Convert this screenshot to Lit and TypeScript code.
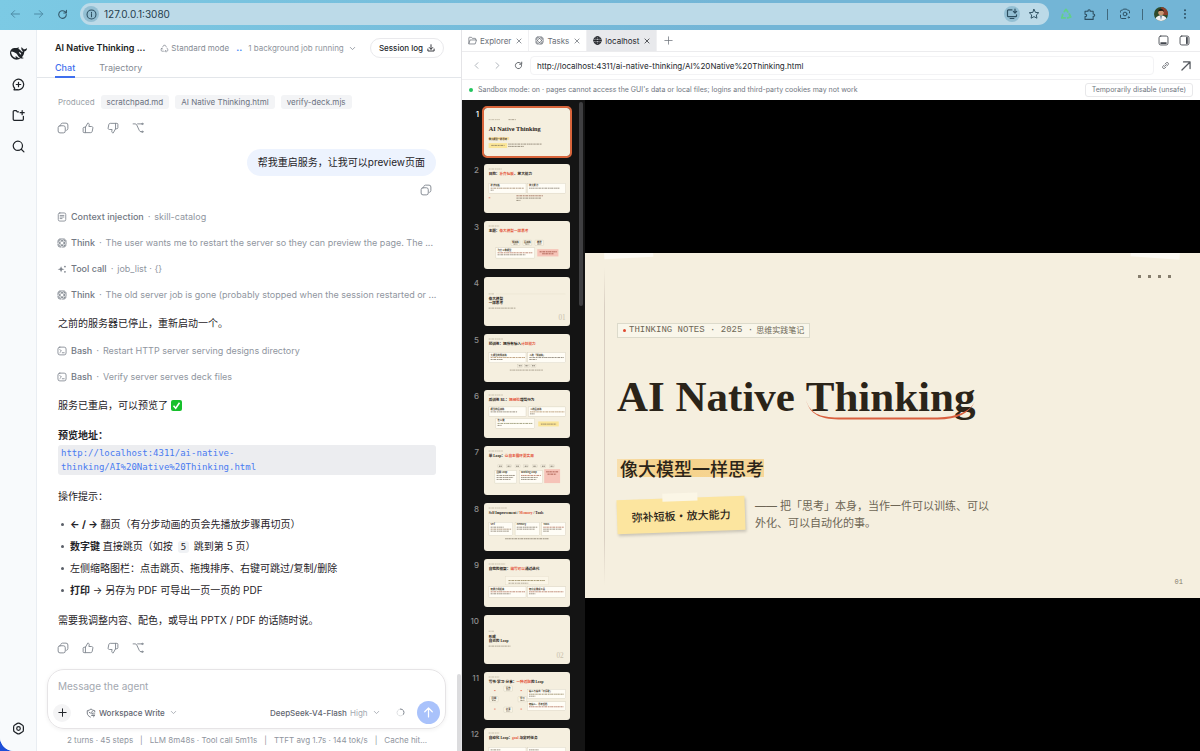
import { LitElement, html, svg, css, TemplateResult } from "lit";
import { customElement, property } from "lit/decorators.js";

/* ---------- icons: 16 × 16 grid, stroked with the current colour ---------- */
const paths: Record<string, TemplateResult> = {
  back: svg`<path d="M14 8H3M7.500 3.500 3 8l4.500 4.500"/>`,
  forward: svg`<path d="M2 8h11M8.500 3.500 13 8l-4.500 4.500"/>`,
  reload: svg`<path d="M13.500 8A5.500 5.500 0 1 1 11.600 3.900L13.500 5.600M13.700 2v3.800H9.900"/>`,
  info: svg`<circle cx="8" cy="8" r="6.500"/><path d="M8 7.300v4M8 4.600v1.200"/>`,
  install: svg`<path d="M8 2.500H3.200a1.200 1.200 0 0 0-1.200 1.200v6.600a1.200 1.200 0 0 0 1.200 1.200h9.600a1.200 1.200 0 0 0 1.200-1.200V9M5.500 14h5M12 1.500v5M9.800 4.600 12 6.800l2.200-2.200"/>`,
  star: svg`<path d="m8 1.800 1.900 4 4.400.5-3.200 3 .8 4.300L8 11.500l-3.900 2.100.8-4.300-3.200-3 4.400-.5z"/>`,
  recycle: svg`<path d="M5.800 4.600 8 1.800l2.400 3.400M12.300 8l2 3.800-4 1.400M6.700 13.200H2.400L3.600 8.600" stroke-width="2.400"/>`,
  puzzle: svg`<path d="M2.500 4h3.700c-.6-2.600 3.200-2.600 2.600 0h3.700v3.500c2.500-.5 2.500 3.200 0 2.700V14h-10v-3.500c2.600.4 2.600-3.200 0-2.800z"/>`,
  lens: svg`<path d="M2 5.500v-1A1.500 1.500 0 0 1 3.500 3h1L5.800 1.500h4.400L11.500 3h1A1.500 1.500 0 0 1 14 4.500v2M2 9.500v3A1.500 1.500 0 0 0 3.500 14H9"/><circle cx="8" cy="8" r="2.500"/><circle cx="13" cy="12.500" r=".8"/>`,
  dots: svg`<g fill="currentColor" stroke="none"><circle cx="8" cy="3" r="1.300"/><circle cx="8" cy="8" r="1.300"/><circle cx="8" cy="13" r="1.300"/></g>`,
  newChat: svg`<path d="M3.300 12.600A6.500 6.500 0 1 1 6.300 14.300L2.500 14.500zM8 5.300v5.400M5.300 8h5.400"/>`,
  folderPlus: svg`<path d="M8 3.500H6.500L5.300 2H2.800A1.300 1.300 0 0 0 1.500 3.300v9.400A1.300 1.300 0 0 0 2.800 14h9.900a1.300 1.300 0 0 0 1.300-1.300V9M12.500 2v5M10 4.500h5"/>`,
  search: svg`<circle cx="7.200" cy="7.200" r="5.700"/><path d="m11.400 11.400 3.300 3.300"/>`,
  gear: svg`<path d="M6.600 1.700a2.800 2.800 0 0 1 2.800 0l3.200 1.900A2.800 2.800 0 0 1 14 6v4a2.800 2.800 0 0 1-1.400 2.400l-3.200 1.900a2.800 2.800 0 0 1-2.800 0l-3.200-1.900A2.800 2.800 0 0 1 2 10V6a2.800 2.800 0 0 1 1.400-2.400z"/><circle cx="8" cy="8" r="2.200"/>`,
  mode: svg`<path d="M4.700 5.300 6.700 2.200h2.600l2 3.100M12.600 7.600l1.700 3-1.300 2.200h-3M6.300 12.800H3L1.700 10.600l1.700-3M10 11.300l-1.500 1.500L10 14.300M2 8.400l1.500-.9 1 1.600"/>`,
  chevron: svg`<path d="m3 5.500 5 5 5-5"/>`,
  left: svg`<path d="M10.500 3 5.500 8l5 5"/>`,
  right: svg`<path d="m5.500 3 5 5-5 5"/>`,
  download: svg`<path d="M8 1.500v9M4.500 7 8 10.500 11.500 7M1.800 10v4h12.400v-4"/>`,
  copy: svg`<rect x="1.500" y="5" width="9.500" height="9.500" rx="2.500"/><path d="M5 3.200A2.500 2.500 0 0 1 7.300 1.500h4.700A2.500 2.500 0 0 1 14.500 4v4.700a2.500 2.500 0 0 1-1.700 2.400"/>`,
  up: svg`<path d="M4.600 7v7.200H2.800a1.300 1.300 0 0 1-1.300-1.300V8.300A1.300 1.300 0 0 1 2.800 7zM4.600 7l3-5.500c1.600 0 2.300 1 2 2.400L9.200 6h3.600c1.200 0 1.900 1 1.700 2l-.9 4.600c-.2 1-1 1.600-2 1.600h-7"/>`,
  down: svg`<path d="M11.400 9V1.800h1.800a1.300 1.300 0 0 1 1.300 1.300v4.600A1.300 1.300 0 0 1 13.200 9zM11.400 9l-3 5.500c-1.600 0-2.300-1-2-2.400L6.800 10H3.200C2 10 1.300 9 1.500 8l.9-4.600c.2-1 1-1.600 2-1.600h7"/>`,
  branch: svg`<path d="M1.500 2.500h2.700c1 0 1.600.5 2.100 1.400l3.400 7.300c.5 1.100 1.200 1.800 2.300 1.800h1M7.500 2.500h5.500"/><circle cx="13.800" cy="2.500" r=".9"/><circle cx="13.800" cy="13" r=".9"/>`,
  note: svg`<rect x="2" y="1.500" width="12" height="13" rx="2.500"/><path d="M5 5.500h6M5 8h6M5 10.500h3"/>`,
  atom: svg`<rect x="1.500" y="1.500" width="13" height="13" rx="3.500" stroke-dasharray="7 2"/><ellipse cx="8" cy="8" rx="6.500" ry="3" transform="rotate(45 8 8)"/><ellipse cx="8" cy="8" rx="6.500" ry="3" transform="rotate(-45 8 8)"/>`,
  spark: svg`<g fill="currentColor" stroke="none"><path d="M6.500 3.500 8 7l4 1.300-4 1.300-1.500 3.600L5 9.600 1 8.300 5 7z"/><circle cx="12.700" cy="4" r="1.400"/><circle cx="12.700" cy="12.400" r="1.400"/></g>`,
  bash: svg`<rect x="1.500" y="1.800" width="13" height="12.400" rx="3"/><path d="M4.500 5.500 7 8l-2.500 2.500M8.500 10.800h3"/>`,
  plus: svg`<path d="M8 1.500v13M1.500 8h13"/>`,
  shield: svg`<path d="M14 6.500V4.300C11.500 4 9.500 3 8 1.500 6.500 3 4.500 4 2 4.300V8c0 3 2 5.200 5 6.500M5 6.500l2 2 3.500-3.500M14 9.500H9l2-2M9 12h5l-2 2"/>`,
  send: svg`<path d="M8 14.500v-13M2.500 7 8 1.500 13.500 7"/>`,
  spin: svg`<path d="M8 1.800a6.200 6.200 0 0 1 5.400 9.300"/><path d="M13.400 11.100A6.200 6.200 0 1 1 8 1.800" opacity=".25"/>`,
  folder: svg`<path d="M1.500 13V3.300A1 1 0 0 1 2.500 2.300h3.700l1.500 1.900h5a1 1 0 0 1 1 1v1.700M1.500 13.500 3.800 7h11.400l-2.200 6.500z"/>`,
  close: svg`<path d="m2.500 2.500 11 11M13.500 2.500l-11 11"/>`,
  globe: svg`<circle cx="8" cy="8" r="6.500"/><ellipse cx="8" cy="8" rx="2.900" ry="6.500"/><path d="M1.500 8h13M2.500 4.700h11M2.500 11.300h11"/>`,
  panelBottom: svg`<rect x="1.500" y="1.500" width="13" height="13" rx="2.500"/><path d="M4.500 11.700h7" stroke-width="2.600"/>`,
  panelRight: svg`<rect x="1.500" y="1.500" width="13" height="13" rx="2.500"/><path d="M11.500 4v8" stroke-width="2.600"/>`,
  link: svg`<path d="M7 4.500 9.500 2a3 3 0 0 1 4.300 4.300L11.300 8.800M9 11.500 6.500 14a3 3 0 0 1-4.300-4.300L4.700 7.200M5.800 10.200l4.400-4.400"/>`,
  arrowOut: svg`<path d="M1.500 14.500l13-13M4 1.500h10.500V12"/>`,
};

const icon = (name: string, size: number, weight = 1.3) => html`<svg
  width=${size} height=${size} viewBox="0 0 16 16" fill="none" stroke="currentColor"
  stroke-width=${weight} stroke-linecap="round" stroke-linejoin="round" aria-hidden="true">${paths[name]}</svg>`;

const whale = html`<svg width="17" height="17" viewBox="0 0 24 24" fill="currentColor" aria-hidden="true"><path d="M23.748 4.482c-.254-.124-.364.113-.512.234-.051.039-.094.09-.137.136-.372.397-.806.657-1.373.626-.829-.046-1.537.214-2.163.848-.133-.782-.575-1.248-1.247-1.548-.352-.156-.708-.311-.955-.65-.172-.241-.219-.51-.305-.774-.055-.16-.11-.323-.293-.35-.2-.031-.278.136-.356.276-.313.572-.434 1.202-.422 1.840.027 1.436.633 2.580 1.838 3.393.137.093.172.187.129.323-.082.280-.180.552-.266.833-.055.179-.137.217-.329.140a5.526 5.526 0 01-1.736-1.180c-.857-.828-1.631-1.742-2.597-2.458a11.365 11.365 0 00-.689-.471c-.985-.957.130-1.743.388-1.836.270-.098.093-.432-.779-.428-.872.004-1.670.295-2.687.684a3.055 3.055 0 01-.465.137 9.597 9.597 0 00-2.883-.102c-1.885.210-3.390 1.102-4.497 2.623C.082 8.606-.231 10.684.152 12.850c.403 2.284 1.569 4.175 3.360 5.653 1.858 1.533 3.997 2.284 6.438 2.140 1.482-.085 3.133-.284 4.994-1.860.470.234.962.327 1.780.397.630.059 1.236-.030 1.705-.128.735-.156.684-.837.419-.961-2.155-1.004-1.682-.595-2.113-.926 1.096-1.296 2.746-2.642 3.392-7.003.050-.347.007-.565 0-.845-.004-.170.035-.237.230-.256a4.173 4.173 0 001.545-.475c1.396-.763 1.960-2.015 2.093-3.517.020-.230-.004-.467-.247-.588zM11.581 18c-2.089-1.642-3.102-2.183-3.520-2.160-.392.024-.321.471-.235.763.090.288.207.486.371.739.114.167.192.416-.113.603-.673.416-1.842-.140-1.897-.167-1.361-.802-2.500-1.860-3.301-3.307-.774-1.393-1.224-2.887-1.298-4.482-.020-.386.093-.522.477-.592a4.696 4.696 0 011.529-.039c2.132.312 3.946 1.265 5.468 2.774.868.860 1.525 1.887 2.202 2.891.720 1.066 1.494 2.082 2.480 2.914.348.292.625.514.891.677-.802.090-2.140.110-3.054-.614zm1-6.440a.306.306 0 01.415-.287.302.302 0 01.200.288.306.306 0 01-.310.307.303.303 0 01-.304-.308zm3.110 1.596c-.200.081-.399.151-.590.160a1.245 1.245 0 01-.798-.254c-.274-.230-.470-.358-.552-.758a1.730 1.730 0 01.016-.588c.070-.327-.008-.537-.239-.727-.187-.156-.426-.199-.688-.199a.559.559 0 01-.254-.078c-.110-.054-.200-.190-.114-.358.028-.054.160-.186.192-.210.356-.202.767-.136 1.146.016.352.144.618.408 1.001.782.391.451.462.576.685.914.176.265.336.537.445.848.067.195-.019.354-.250.452z"/></svg>`;

/* ---------- miniature slides, drawn on a 260 × 146 grid ---------- */
const RED = "#e4573d";
const INK = "#2b2419";

const head = (label: number, ...parts: [string, string?][]) => svg`
  ${ink(14, 15, label, "#b5ab97")}
  <text class="t" x="14" y="34">${parts.map(([t, c]) => svg`<tspan fill=${c ?? INK}>${t}</tspan>`)}</text>`;
const ink = (x: number, y: number, w: number, c = "#6d6352") =>
  svg`<path d="M${x} ${y}h${w}" stroke=${c} stroke-width="2" stroke-dasharray="5 1 3 1 7 2" fill="none"/>`;
const card = (x: number, y: number, w: number, h: number, title: string, lines: [number, string?][]) => svg`
  <rect x=${x} y=${y} width=${w} height=${h} fill="#fffdf6" stroke="#ccc5b2" stroke-width="1"/>
  ${title ? svg`<text class="s" x=${x + 5} y=${y + 9}>${title}</text>` : ink(x + 5, y + 8, 30)}
  ${lines.map(([lw, c], i) => ink(x + 5, y + 15 + i * 6, lw, c))}`;
const chip = (x: number, y: number, t: string) => svg`
  <rect x=${x} y=${y} width="26" height="16" rx="2" fill="#fbf6e8" stroke="#ccc5b2"/>
  <text class="s" x=${x + 13} y=${y + 8} text-anchor="middle">${t}</text>${ink(x + 7, y + 12, 12)}`;
const step = (x: number, y: number) => svg`
  <rect x=${x} y=${y} width="15" height="8" fill="#fbf6e8" stroke="#ccc5b2"/>${ink(x + 3, y + 4, 9, "#3c3425")}`;

const slides: { name: string; art: TemplateResult }[] = [
  { name: "AI Native Thinking", art: svg`
      ${ink(14, 35, 34, "#b5ab97")}${ink(74, 35, 22, "#8d8371")}
      <text class="h" x="14" y="70">AI Native Thinking</text>
      <rect x="14" y="88" width="62" height="8" fill="#f7dc9c"/>
      <text class="s" x="14" y="96" fill="#6b3410">像大模型一样思考</text>
      <rect x="14" y="106" width="56" height="15" fill="#fbe597"/>${ink(22, 113, 40)}
      ${ink(73, 109, 102)}${ink(73, 116, 48)}` },
  { name: "目的", art: svg`${head(40, ["目的："], ["补齐短板", RED], ["、放大能力"])}
      ${card(15, 58, 112, 30, "补齐短板", [[100, "#8a6a4a"], [10]])}
      ${card(131, 58, 116, 30, "放大能力", [[92]])}
      ${ink(14, 102, 6, RED)}${ink(98, 96, 80, "#8a4a35")}${ink(98, 103, 74)}${ink(98, 110, 12)}` },
  { name: "主题", art: svg`${head(32, ["主题："], ["像大模型一样思考", RED])}
      ${chip(82, 58, "预训练")}${chip(118, 58, "后训练")}${chip(154, 58, "推理")}
      ${card(36, 81, 117, 31, "为什么像模型", [[106, "#a3563f"], [84]])}
      <rect x="161" y="85" width="64" height="22" fill="#f6c3b8"/>${ink(168, 93, 52, "#8a3325")}${ink(176, 99, 34, "#8a3325")}` },
  { name: "像大模型一样思考", art: svg`${ink(14, 51, 16, "#b5ab97")}
      <path d="M36 51H246" stroke="#e2dac6"/>
      <text class="t" x="14" y="70" fill=${INK}>像大模型</text><text class="t" x="14" y="83" fill=${INK}>一样思考</text>
      ${ink(14, 94, 82, "#8d8371")}<text class="n" x="225" y="129">01</text>` },
  { name: "预训练", art: svg`${head(44, ["预训练：把所有输入"], ["计划能力", RED])}
      ${card(15, 56, 112, 31, "大模型的预训练", [[104, "#a37a4a"], [36]])}
      ${card(132, 56, 114, 31, "人的「预训练」", [[104], [22]])}
      ${step(102, 92)}${step(122, 92)}${step(142, 92)}${ink(78, 109, 100, "#8d8371")}` },
  { name: "后训练", art: svg`${head(44, ["后训练 RL："], ["把经验", RED], ["增强行为"])}
      ${card(15, 51, 112, 28, "模型的后训练", [[80]])}
      ${card(134, 51, 112, 28, "人的后训练", [[104, "#a37a4a"], [14]])}
      ${card(36, 86, 117, 30, "怎么做", [[106, "#7a7a4a"], [12]])}
      <rect x="164" y="95" width="62" height="15" fill="#fbe597"/>${ink(172, 103, 46)}` },
  { name: "单 Loop", art: svg`${head(44, ["单 Loop："], ["让自主循环更实用", RED])}
      ${[42, 68, 94, 120, 146, 172, 198].map((x) => step(x, 57))}
      ${card(33, 74, 66, 38, "回顾 Loop", [[56], [50], [42]])}
      ${card(107, 74, 70, 38, "Working Loop", [[60, "#a3563f"], [50], [46]])}
      <rect x="182" y="70" width="48" height="42" fill="#f6c3b8"/>${ink(188, 78, 38, "#8a3325")}${ink(192, 85, 26, "#8a3325")}` },
  { name: "Self Improvement", art: svg`${head(56, ["Self Improvement / "], ["Memory", RED], [" / Tools"])}
      ${card(15, 58, 72, 40, "Self", [[40], [62, "#8a6a4a"], [56]])}
      ${card(94, 58, 74, 40, "Memory", [[62], [54]])}
      ${card(174, 58, 72, 40, "Tools", [[62, "#a3563f"], [56], [18]])}
      ${ink(64, 108, 132)}` },
  { name: "自我的框架", art: svg`${head(50, ["自我的框架："], ["编写可以", RED], ["通过迭代"])}
      <rect x="64" y="52" width="132" height="26" fill="#fbf6e8" stroke="#ddd5c0"/>${ink(74, 65, 110, "#7a6a3a")}${ink(74, 73, 60, "#8d8371")}
      ${card(15, 84, 112, 32, "把能力用起来", [[104, "#a3563f"], [60]])}
      ${card(131, 84, 116, 32, "把方法做成工具", [[104, "#a3563f"], [20]])}` },
  { name: "形成自己的 Loop", art: svg`${ink(14, 49, 16, "#b5ab97")}
      <text class="t" x="14" y="69" fill=${INK}>形成</text><text class="t" x="14" y="83" fill=${INK}>自己的 Loop</text>
      ${ink(14, 94, 66, "#8d8371")}<text class="n" x="219" y="131">02</text>` },
  { name: "写书 · 学习 · 分享", art: svg`${head(32, ["写书·学习·分享："], ["一种适配", RED], ["的 Loop"])}
      ${chip(60, 42, "写作")}${chip(17, 74, "回顾")}${chip(103, 74, "学习")}${chip(60, 106, "分享")}
      ${ink(30, 56, 5, RED)}${ink(110, 56, 5, RED)}${ink(30, 112, 5, RED)}${ink(110, 112, 5, RED)}
      ${card(131, 52, 116, 28, "输入与输出「不停歇」", [[106, "#7a6a3a"], [20]])}
      ${card(131, 90, 116, 26, "把输入、思考留档", [[104, "#a3563f"]])}` },
  { name: "自动化 Loop", art: svg`${head(32, ["自动化 Loop："], ["goal", RED], [" 与定时任务"])}
      ${card(15, 58, 112, 40, "", [[80], [60]])}${card(131, 58, 116, 40, "", [[80], [60]])}` },
];

@customElement("deck-thumb")
export class DeckThumb extends LitElement {
  @property({ type: Number }) index = 0;
  @property({ type: Boolean, reflect: true }) current = false;

  static styles = css`
    :host { display: grid; grid-template-columns: 17px 86px; column-gap: 5px; }
    .num { font: 500 8px/12px Inter, sans-serif; color: #8f8f8f; text-align: right; }
    :host([current]) .num { color: #fff; }
    .page { display: block; aspect-ratio: 16 / 9; padding: 0; border: 0; border-radius: 3px; background: #f5efdf; overflow: hidden; }
    :host([current]) .page { outline: 2px solid #d9653b; }
    .art { display: block; width: 100%; height: 100%; }
    .t { font: 700 11px "Liberation Serif", "Noto Sans CJK SC", serif; }
    .h { font: 700 19px "Liberation Serif", serif; fill: #2b2419; }
    .s { font: 700 7px "Noto Sans CJK SC", sans-serif; fill: #3c3425; }
    .n { font: 22px "Liberation Serif", serif; fill: #c9c1ad; }
  `;

  render() {
    const s = slides[this.index];
    return html`
      <span class="num">${this.index + 1}</span>
      <button class="page" aria-label=${s.name}>
        <svg class="art" viewBox="0 0 260 146" aria-hidden="true">${s.art}</svg>
      </button>`;
  }
}

@customElement("app-root")
export class AppRoot extends LitElement {
  static styles = css`
    :host { display: block; height: 100vh; background: #1d4ed8; font-family: Inter, "Noto Sans CJK SC", sans-serif; font-size: 9px; line-height: 14px; color: #1f2328; }
    * { box-sizing: border-box; }
    svg { display: block; flex: none; }
    button { font: inherit; color: inherit; background: none; border: 0; padding: 0; display: flex; align-items: center; justify-content: center; flex: none; }
    input, textarea, select { font: inherit; color: inherit; background: none; border: 0; padding: 0; margin: 0; outline: 0; appearance: none; resize: none; }
    p, ul, h1, h2 { margin: 0; padding: 0; }
    .window { height: 100%; display: flex; flex-direction: column; overflow: hidden; border-radius: 0 0 0 14px; background: #fff; }

    /* browser toolbar */
    .browser { display: flex; align-items: center; gap: 11px; height: 30px; padding: 0 9px 2px; background: linear-gradient(100deg, #7ccae4, #73b5d6 60%); color: #2c4e60; flex: none; }
    .nav { display: flex; gap: 12px; color: #4d8aa3; padding-right: 1px; }
    .nav .live { color: #34596b; }
    .omni { flex: 1; display: flex; align-items: center; gap: 5px; height: 22px; padding: 0 9px 0 3px; border-radius: 11px; background: #bcdae8; }
    .omni input { flex: 1; font-size: 10px; color: #26404e; }
    .disc { width: 16px; height: 16px; border-radius: 50%; background: #93bfd3; }
    .omni .fav { margin-left: 3px; }
    .green { color: #62d08a; }
    .sep { width: 1px; height: 11px; background: #41697d; }

    /* workspace */
    .work { flex: 1; min-height: 0; display: grid; grid-template-columns: 37px minmax(0, 425fr) minmax(0, 738fr); }
    .rail { display: flex; flex-direction: column; align-items: center; gap: 18px; padding: 16px 0; background: #f8fafc; border-right: 1px solid #e9edf2; }
    .rail .home { height: 14px; }
    .rail .end { margin-top: auto; }

    .chat { position: relative; display: flex; flex-direction: column; min-height: 0; border-right: 1px solid #e4e4e7; }
    .top { display: flex; align-items: center; height: 28px; margin-top: 4px; padding: 0 17px 0 18px; font-size: 8px; color: #858b94; white-space: nowrap; flex: none; }
    .top h1 { font-size: 9px; font-weight: 600; color: #1b1d21; margin-right: 15px; }
    .mode { gap: 2px; }
    .pulse { color: #3b82f6; font-size: 9px; margin: 0 6px 0 7px; }
    .jobs { gap: 5px; color: #8f959e; }
    .log { margin-left: auto; gap: 4px; height: 20px; padding: 0 8px; border: 1px solid #e9e9ec; border-radius: 10px; color: #24272c; font-weight: 500; }
    .tabs { display: flex; gap: 24px; height: 16px; padding: 0 18px; border-bottom: 1px solid #e3e6ea; color: #858b94; flex: none; }
    .tabs button { align-items: flex-start; height: 16px; line-height: 11px; }
    .tabs .on { color: #3f6fee; font-weight: 500; border-bottom: 2px solid #3f6fee; }

    .feed { flex: 1; min-height: 0; overflow: hidden; display: flex; flex-direction: column; padding: 17px 25px 0 20px; }
    .feed > * { margin-left: 1px; }
    .made { display: flex; align-items: center; gap: 6px; height: 14px; font-size: 8px; color: #9a9fa7; }
    .file { padding: 0 6px; height: 14px; border-radius: 3px; background: #f3f4f6; color: #6b7280; }
    .acts { display: flex; gap: 13px; margin: 13px 0 0; color: #7d838c; flex: none; }
    .ask { align-self: flex-end; margin-top: 15px; padding: 4px 11px; border-radius: 14px; background: #edf3fe; font-size: 10px; line-height: 19px; }
    .acts.own { align-self: flex-end; margin: 8px 4px 2px; }
    .row { display: flex; align-items: center; gap: 4px; margin: 12px -12px 0 0; height: 14px; color: #9096a0; white-space: nowrap; flex: none; }
    .row b { font-weight: 500; color: #717782; }
    .row svg { color: #7d838c; }
    .say { margin-top: 12px; font-size: 10px; line-height: 18px; display: flex; align-items: center; gap: 3px; flex: none; }
    .url { display: block; margin-top: 1px; padding: 1px 9px 1px 3px; border-radius: 3px; background: #ecedf0; color: #4a7bf0; font: 9px/14px "DejaVu Sans Mono", monospace; text-decoration: none; flex: none; }
    .tips { list-style: none; margin-top: 10px; display: flex; flex-direction: column; gap: 4px; font-size: 10px; line-height: 18px; flex: none; }
    .tips li { padding-left: 12px; position: relative; }
    .tips li::before { content: ""; position: absolute; left: 3px; top: 8px; width: 3px; height: 3px; border-radius: 50%; background: #5a5f68; }
    kbd { font: 9px/12px "DejaVu Sans Mono", monospace; background: #f0f2f5; border-radius: 3px; padding: 1px 3px; margin: 0 2px; }

    .composer { margin: 0 15px 0 10px; padding: 9px 5px 4px 10px; border: 1px solid #e6e4e6; border-radius: 17px; box-shadow: 0 1px 4px #0000000f; flex: none; }
    .composer textarea { display: block; width: 100%; height: 16px; line-height: 14px; font-size: 10px; overflow: hidden; }
    textarea::placeholder { color: #a3a8b0; opacity: 1; }
    .tools { display: flex; align-items: center; gap: 3px; margin: 6px 0 0 -5px; font-size: 8px; color: #5f656f; font-weight: 500; }
    .add { width: 18px; height: 18px; border-radius: 50%; background: #f4f4f5; color: #24272c; margin-right: 12px; }
    .tools .model { margin-left: auto; }
    .tools .effort { font-weight: 400; color: #a3a8b0; }
    .tools .chev { color: #a3a8b0; margin-left: 2px; }
    .wait { margin: 0 9px 0 13px; color: #717782; }
    .go { width: 23px; height: 23px; border-radius: 50%; background: #a9c2fb; color: #fff; }
    .stats { display: flex; justify-content: center; gap: 7px; height: 22px; line-height: 22px; font-size: 8px; color: #8f959e; white-space: nowrap; padding-right: 4px; flex: none; }
    .thumb { position: absolute; right: 0; bottom: 0; width: 4px; height: 77px; background: #dcdcde; border-radius: 2px 2px 0 0; }

    /* preview pane */
    .pane { display: flex; flex-direction: column; min-height: 0; }
    .strip { display: flex; align-items: stretch; height: 22px; border-bottom: 1px solid #ececee; color: #6b7078; font-size: 8px; padding-right: 10px; flex: none; }
    .tab { display: flex; align-items: center; gap: 3px; padding: 0 6px; border-right: 1px solid #f0f0f2; }
    .tab .x { margin-left: 2px; }
    .tab.on { background: #e8e9ec; color: #24272c; }
    .strip .new { margin-left: 7px; }
    .strip .panels { margin-left: auto; display: flex; gap: 10px; color: #44484f; }
    .addr { display: flex; align-items: center; gap: 12px; height: 28px; padding: 0 9px 0 10px; border-bottom: 1px solid #f0f0f2; color: #55595f; flex: none; }
    .addr .off { color: #a3a8b0; }
    .addr input { flex: 1; height: 19px; padding: 0 6px; border: 1px solid #f3f3f5; border-radius: 4px; font-size: 8px; color: #24272c; margin-left: -5px; margin-right: -4px; }
    .guard { display: flex; align-items: center; gap: 5px; height: 20px; padding: 0 7px; color: #717782; font-size: 7px; flex: none; }
    .lamp { width: 4px; height: 4px; border-radius: 50%; background: #22c55e; }
    .guard button { margin-left: auto; height: 14px; padding: 0 6px; border: 1px solid #e8e8ea; border-radius: 3px; }

    .deck { flex: 1; min-height: 0; display: flex; background: #000; }
    .list { position: relative; width: 123px; padding: 8px 0 0; display: flex; flex-direction: column; gap: 8px; overflow: hidden; background: #141414; flex: none; }
    .bar { position: absolute; right: 2px; top: 2px; width: 4px; height: 204px; border-radius: 2px; background: #3f3f41; }
    .stage { flex: 1; min-width: 0; display: flex; align-items: center; }
    .slide { position: relative; width: 100%; aspect-ratio: 16 / 9; padding: 70px 32px 0; overflow: hidden; background: #f5efdf; color: #2b2419; display: flex; flex-direction: column; align-items: flex-start; }
    .margin { position: absolute; left: 19px; top: 15px; bottom: 13px; width: 1px; background: linear-gradient(#ddd2c400, #d9cfc2 12%, #d9cfc2 85%, #ddd2c400); }
    .tape { position: absolute; width: 49px; height: 14px; top: -9px; background: #fbf9f2; }
    .tape.l { left: 19px; transform: rotate(-3deg); }
    .tape.r { right: 20px; transform: rotate(4deg); }
    .holes { position: absolute; right: 29px; top: 22px; display: flex; gap: 7px; }
    .holes i { width: 3px; height: 3px; background: #857d6d; }
    .label { display: flex; align-items: center; gap: 3px; height: 15px; padding: 0 5px; border: 1px solid #dcdacb; background: #f9f6ea; font: 9px/13px "Liberation Mono", "Noto Sans CJK SC", monospace; color: #6d6655; white-space: pre; }
    .label i { width: 3px; height: 3px; border-radius: 50%; background: #e0492f; }
    .label small { font-size: 8px; }
    .slide h2 { margin-top: 31px; font: 700 43px/56px "Liberation Serif", serif; white-space: nowrap; }
    .under { position: relative; display: inline-block; }
    .under svg { position: absolute; left: 0; bottom: 4px; width: 100%; height: 22px; }
    .mark { margin-top: 34px; padding: 0 0 0 3px; font: 500 18px/18px "Noto Sans CJK SC", sans-serif; background: linear-gradient(90deg, #f8dfae, #f5d189 30%, #f6d799); }
    .line { display: flex; align-items: flex-start; gap: 10px; margin-top: 21px; }
    .sticky { position: relative; width: 128px; height: 34px; background: #fce59f; box-shadow: 1px 2px 3px #0000002e; transform: rotate(-2deg); font: 500 11px/34px "Noto Sans CJK SC", sans-serif; text-align: center; }
    .sticky i { position: absolute; left: 46px; top: -5px; width: 35px; height: 8px; background: #fbf6e6; }
    .line p { max-width: 240px; font-size: 11px; line-height: 17px; color: #6d6655; }
    .page { position: absolute; right: 17px; bottom: 11px; font: 7px/10px "Liberation Mono", monospace; color: #857d6d; }
  `;

  private feedback() {
    return html`<div class="acts">
      <button aria-label="Copy">${icon("copy", 12, 1.2)}</button>
      <button aria-label="Good answer">${icon("up", 12, 1.2)}</button>
      <button aria-label="Bad answer">${icon("down", 12, 1.2)}</button>
      <button aria-label="Branch">${icon("branch", 12, 1.2)}</button>
    </div>`;
  }

  private row(ic: string, name: string, text: string) {
    return html`<div class="row">${icon(ic, 10)}<b>${name}</b><i>·</i><span>${text}</span></div>`;
  }

  private browser() {
    return html`<header class="browser">
      <div class="nav">
        <button aria-label="Back">${icon("back", 12)}</button>
        <button aria-label="Forward">${icon("forward", 12)}</button>
        <button class="live" aria-label="Reload">${icon("reload", 11, 1.6)}</button>
      </div>
      <div class="omni">
        <button class="disc" aria-label="Site information">${icon("info", 11, 1.5)}</button>
        <input aria-label="Address" value="127.0.0.1:3080" />
        <button class="disc" aria-label="Install app">${icon("install", 12, 1.6)}</button>
        <button class="fav" aria-label="Bookmark">${icon("star", 12)}</button>
      </div>
      <button class="green" aria-label="Recycle extension">${icon("recycle", 12)}</button>
      <button aria-label="Extensions">${icon("puzzle", 13)}</button>
      <span class="sep"></span>
      <button aria-label="Lens">${icon("lens", 12)}</button>
      <span class="sep"></span>
      <button aria-label="Profile">
        <svg width="14" height="14" viewBox="0 0 14 14" aria-hidden="true">
          <clipPath id="av"><circle cx="7" cy="7" r="7"/></clipPath>
          <g clip-path="url(#av)"><rect width="14" height="14" fill="#2e4a2c"/><path d="M7 0h7v8H9z" fill="#8b3f2c"/><path d="M1 14c0-4 3-5.500 6-5.500s6 1.500 6 5.500z" fill="#f0f2f3"/><circle cx="7" cy="5.500" r="2.800" fill="#c99672"/><path d="M4 5c0-4 6-4 6 0L8.500 3.800 5 4z" fill="#1c1512"/><path d="m6.300 9 .7 4 .7-4z" fill="#3a5a80"/></g>
        </svg>
      </button>
      <button aria-label="Menu">${icon("dots", 12)}</button>
    </header>`;
  }

  private chat() {
    return html`<main class="chat">
      <div class="top">
        <h1>AI Native Thinking ...</h1>
        <button class="mode">${icon("mode", 9)}Standard mode</button>
        <b class="pulse">..</b>
        <button class="jobs">1 background job running ${icon("chevron", 7, 2)}</button>
        <button class="log">Session log ${icon("download", 8, 1.8)}</button>
      </div>
      <nav class="tabs"><button class="on">Chat</button><button>Trajectory</button></nav>

      <section class="feed">
        <div class="made">Produced
          <button class="file">scratchpad.md</button>
          <button class="file">AI Native Thinking.html</button>
          <button class="file">verify-deck.mjs</button>
        </div>
        ${this.feedback()}
        <p class="ask">帮我重启服务，让我可以preview页面</p>
        <div class="acts own"><button aria-label="Copy message">${icon("copy", 12, 1.2)}</button></div>
        ${this.row("note", "Context injection", "skill-catalog")}
        ${this.row("atom", "Think", "The user wants me to restart the server so they can preview the page. The ...")}
        ${this.row("spark", "Tool call", "job_list · {}")}
        ${this.row("atom", "Think", "The old server job is gone (probably stopped when the session restarted or ...")}
        <p class="say">之前的服务器已停止，重新启动一个。</p>
        ${this.row("bash", "Bash", "Restart HTTP server serving designs directory")}
        ${this.row("bash", "Bash", "Verify server serves deck files")}
        <p class="say">服务已重启，可以预览了
          <svg width="11" height="11" viewBox="0 0 11 11" role="img" aria-label="done"><rect width="11" height="11" rx="2" fill="#16c02c"/><path d="m2.500 5.800 2.200 2.400 3.800-5.400" fill="none" stroke="#fff" stroke-width="1.500"/></svg>
        </p>
        <p class="say"><b>预览地址：</b></p>
        <a class="url" href="#preview">http://localhost:4311/ai-native-<wbr />thinking/AI%20Native%20Thinking.html</a>
        <p class="say">操作提示：</p>
        <ul class="tips">
          <li><b>← / →</b> 翻页（有分步动画的页会先播放步骤再切页）</li>
          <li><b>数字键</b> 直接跳页（如按 <kbd>5</kbd> 跳到第 5 页）</li>
          <li>左侧缩略图栏：点击跳页、拖拽排序、右键可跳过/复制/删除</li>
          <li><b>打印</b> → 另存为 PDF 可导出一页一页的 PDF</li>
        </ul>
        <p class="say">需要我调整内容、配色，或导出 PPTX / PDF 的话随时说。</p>
        ${this.feedback()}
      </section>

      <form class="composer">
        <textarea aria-label="Message" placeholder="Message the agent"></textarea>
        <div class="tools">
          <button type="button" class="add" aria-label="Attach">${icon("plus", 9, 1.8)}</button>
          ${icon("shield", 10)}
          <select aria-label="Access"><option>Workspace Write</option></select>
          <span class="chev">${icon("chevron", 7, 2)}</span>
          <select class="model" aria-label="Model"><option>DeepSeek-V4-Flash</option></select>
          <select class="effort" aria-label="Effort"><option>High</option></select>
          <span class="chev">${icon("chevron", 7, 2)}</span>
          <span class="wait">${icon("spin", 9, 1.6)}</span>
          <button type="button" class="go" aria-label="Send">${icon("send", 11, 1.8)}</button>
        </div>
      </form>
      <footer class="stats">
        <span>2 turns · 45 steps</span><span>|</span><span>LLM 8m48s · Tool call 5m11s</span><span>|</span><span>TTFT avg 1.7s · 144 tok/s</span><span>|</span><span>Cache hit...</span>
      </footer>
      <div class="thumb"></div>
    </main>`;
  }

  private pane() {
    return html`<section class="pane">
      <div class="strip">
        <div class="tab">${icon("folder", 9)}Explorer<button class="x" aria-label="Close Explorer">${icon("close", 6, 2)}</button></div>
        <div class="tab">${icon("atom", 9)}Tasks<button class="x" aria-label="Close Tasks">${icon("close", 6, 2)}</button></div>
        <div class="tab on">${icon("globe", 9, 1.8)}localhost<button class="x" aria-label="Close localhost">${icon("close", 6, 2)}</button></div>
        <button class="new" aria-label="New tab">${icon("plus", 9)}</button>
        <div class="panels">
          <button aria-label="Bottom panel">${icon("panelBottom", 11)}</button>
          <button aria-label="Side panel">${icon("panelRight", 11)}</button>
        </div>
      </div>
      <div class="addr">
        <button class="off" aria-label="Back">${icon("left", 9, 1.5)}</button>
        <button class="off" aria-label="Forward">${icon("right", 9, 1.5)}</button>
        <button aria-label="Reload">${icon("reload", 9, 1.6)}</button>
        <input aria-label="Preview address" value="http://localhost:4311/ai-native-thinking/AI%20Native%20Thinking.html" />
        <button aria-label="Copy link">${icon("link", 7, 1.8)}</button>
        <button aria-label="Open outside">${icon("arrowOut", 10, 2)}</button>
      </div>
      <div class="guard">
        <i class="lamp"></i>Sandbox mode: on · pages cannot access the GUI's data or local files; logins and third-party cookies may not work
        <button>Temporarily disable (unsafe)</button>
      </div>
      <div class="deck">
        <aside class="list">
          ${slides.map((_, i) => html`<deck-thumb .index=${i} ?current=${i === 0}></deck-thumb>`)}
          <div class="bar"></div>
        </aside>
        <div class="stage">
          <article class="slide">
            <i class="tape l"></i><i class="tape r"></i><i class="margin"></i>
            <div class="holes"><i></i><i></i><i></i><i></i></div>
            <div class="label"><i></i>THINKING NOTES · 2025 ·<small>思维实践笔记</small></div>
            <h2>AI Native <span class="under"><svg viewBox="0 0 178 22" preserveAspectRatio="none" aria-hidden="true"><path d="M0 1C4 14 14 18.500 34 18.500H138C160 18 173 12 178 1 172 14 160 20.500 138 20.500H34C14 20 4 15 0 1z" fill="#d9603f"/></svg>Thinking</span></h2>
            <div class="mark">像大模型一样思考</div>
            <div class="line">
              <div class="sticky"><i></i>弥补短板·放大能力</div>
              <p>—— 把「思考」本身，当作一件可以训练、可以外化、可以自动化的事。</p>
            </div>
            <span class="page">01</span>
          </article>
        </div>
      </div>
    </section>`;
  }

  render() {
    return html`<div class="window">
      ${this.browser()}
      <div class="work">
        <aside class="rail">
          <button class="home" aria-label="Home">${whale}</button>
          <button aria-label="New chat">${icon("newChat", 13, 1.5)}</button>
          <button aria-label="New project">${icon("folderPlus", 13, 1.5)}</button>
          <button aria-label="Search">${icon("search", 13, 1.5)}</button>
          <button class="end" aria-label="Settings">${icon("gear", 13, 1.5)}</button>
        </aside>
        ${this.chat()}
        ${this.pane()}
      </div>
    </div>`;
  }
}
